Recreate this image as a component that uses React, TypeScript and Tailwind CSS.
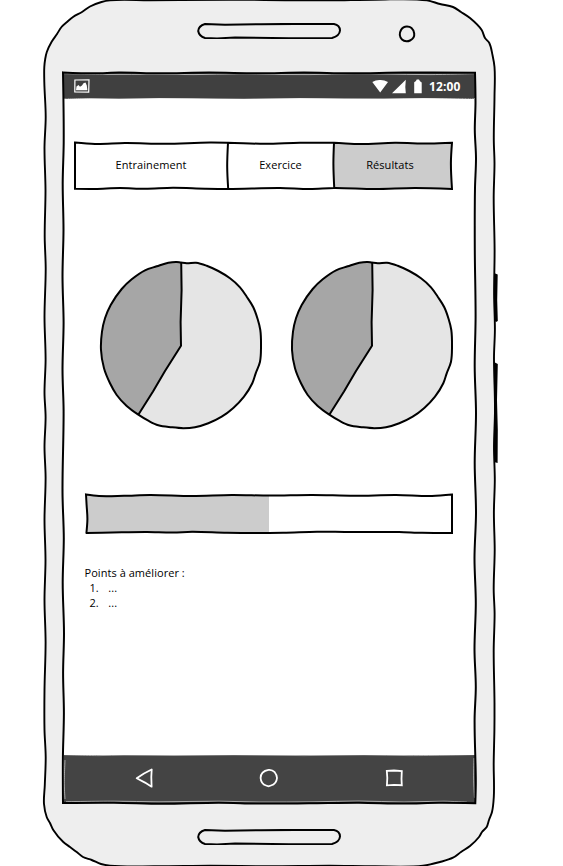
import type { ReactNode } from "react";

type Point = [number, number];

// Rounds the gentle bends of a polyline and leaves its real corners sharp.
function soften(path: string): string {
  return path
    .split("M")
    .filter(Boolean)
    .map((part) => {
      const closed = part.includes("Z");
      const points = part
        .replace("Z", "")
        .trim()
        .split("L")
        .map((pair) => pair.trim().split(" ").map(Number) as Point);
      const count = points.length;
      const at = (i: number): Point =>
        closed ? points[(i + count) % count] : points[Math.max(0, Math.min(count - 1, i))];
      const tangent = (i: number): Point => {
        const [a, b, c] = [at(i - 1), at(i), at(i + 1)];
        const u: Point = [b[0] - a[0], b[1] - a[1]];
        const v: Point = [c[0] - b[0], c[1] - b[1]];
        const lu = Math.hypot(...u);
        const lv = Math.hypot(...v);
        if (!lu || !lv || (u[0] * v[0] + u[1] * v[1]) / (lu * lv) < 0.6) return [0, 0];
        return [(u[0] / lu + v[0] / lv) / 2, (u[1] / lu + v[1] / lv) / 2];
      };
      let d = `M${points[0].join(" ")}`;
      for (let i = 0; i < (closed ? count : count - 1); i++) {
        const p = at(i);
        const q = at(i + 1);
        const reach = Math.hypot(q[0] - p[0], q[1] - p[1]) / 3;
        const s = tangent(i);
        const t = tangent(i + 1);
        d += `C${p[0] + s[0] * reach} ${p[1] + s[1] * reach} ${q[0] - t[0] * reach} ${q[1] - t[1] * reach} ${q[0]} ${q[1]}`;
      }
      return closed ? d + "Z" : d;
    })
    .join("");
}

type OutlineProps = { d: string; className?: string };

// Hand-drawn ink line laid over the box it decorates.
function Outline({ d, className = "text-black" }: OutlineProps) {
  return (
    <svg
      className={`pointer-events-none absolute inset-0 h-full w-full overflow-visible ${className}`}
      fill="none"
      stroke="currentColor"
      strokeWidth="2"
      strokeLinejoin="miter"
      aria-hidden="true"
    >
      <path d={soften(d)} />
    </svg>
  );
}

function PhoneBody() {
  return (
    <svg className="absolute inset-0" width="563" height="866" viewBox="0 0 563 866" aria-hidden="true">
      <path
        d={soften(
          "M110 .4L101.5 2L90 6.5L82 12L73 17L67 22L61.5 27L57 34L51.5 42L46.8 52L45.2 59L44.3 67L44.3 82L45.7 117L44.5 147L45.5 190L44.7 237L45.7 268L44.5 317L45.6 360L44.5 393L45.6 417L44.5 447L45.6 477L44.5 520L45.5 560L44.5 600L45.6 642L44.5 690L44.5 730L45.7 757L44.8 785L44 804L46.7 817L50 823L53.3 830L63.3 842L70 847L76.7 852L83 857L91.7 860L101 864L110 865.6L155 866.3L210 865.8L270 866.3L330 865.8L375 866.3L423 865.7L440 862L453 857.7L461 852L470 846L479 837L482 832L486.7 827L489 820L492 812L493.8 797L493.7 763L494.4 730L494.5 703L493.7 650L494.6 613L493.7 590L494.7 550L493.9 513L494.8 480L494 447L495 410L494 357L494.9 330L494.1 295L494.6 250L493.7 197L494.5 163L493.8 140L494.5 97L494.5 67L492.5 55L489.3 43L485 38L481.7 30L470 18L461 12L453 7L440 4L427 .4L375 -.3L330 .4L285 .2L230 -.3L150 .3Z",
        )}
        fill="#eee"
        stroke="#000"
        strokeWidth="1.9"
        strokeLinejoin="round"
      />
      <path d="M494 273L497.7 274.5L497.2 300L497.8 321L496 322L494 320Z" />
      <path d="M494 362L497.8 364L497 400L497.8 430L497.6 463L494 462Z" />
    </svg>
  );
}

function Speaker() {
  return (
    <svg className="h-4 w-36" viewBox="0 0 144 16" fill="none" stroke="#000" strokeWidth="2" aria-hidden="true">
      <path d="M8 1L28 1.7L64 1.2L98 .9L137 1Q142.8 2 143 7.5Q142.5 13 135 15L92 15.2L38 14.5L20 15.4L8 15Q2 13 1.2 8Q1.5 3 8 1Z" />
    </svg>
  );
}

function PieChart() {
  return (
    <svg className="h-[170px] w-[164px]" viewBox="0 0 164 170" stroke="#000" strokeWidth="2" strokeLinejoin="round" aria-label="Répartition">
      <path
        fill="#e5e5e5"
        stroke="none"
        d="M81.7 2.7L87.7 3.3L97 2.7L107.7 5.7L119.3 11L131 18.3L141 27.3L147.7 36.7L154.3 47.3L158.7 59.3L161.3 70L162 86.7L161 101.7L156.7 113.3L153.3 123.3L145 136.7L134.3 148L122.7 156.7L109.3 163.3L96 167.3L84.3 168.3L72.7 167.3L59.3 165.3L49.3 160.7L39.3 154.7L81.7 85.7Z"
      />
      <path
        fill="#a6a6a6"
        stroke="none"
        d="M39.3 154.7L27.7 146L17.7 135L11 123.3L5 108.3L2.3 90L3.3 71.7L6 58.3L11.7 45L22.7 29L32.7 19.3L46 10.3L57.7 6.3L69.3 2.7L77.7 2L81.7 2.7L82.2 30L81.4 60L81.9 86Z"
      />
      <path
        fill="none"
        d={soften(
          "M81.7 2.5L87.7 3.3L97 2.7L107.7 5.7L119.3 11L131 18.3L141 27.3L147.7 36.7L154.3 47.3L158.7 59.3L161.3 70L162 86.7L161 101.7L156.7 113.3L153.3 123.3L145 136.7L134.3 148L122.7 156.7L109.3 163.3L96 167.3L84.3 168.2L72.7 167.3L59.3 165.3L49.3 160.7L39.3 154.7L27.7 146L17.7 135L11 123.3L5 108.3L2 90L3 71.7L6 58.3L11.7 45L22.7 29L32.7 19.3L46 10.3L57.7 6.3L69.3 2.7L77.7 1.9Z",
        )}
      />
      <path fill="none" d="M82.2 2.5L82.6 30L81.6 62L82 85.7L66 111L54 131.5L39.3 154.7" />
    </svg>
  );
}

function Tab({ children, className }: { children: ReactNode; className: string }) {
  return <button className={`flex h-full items-center justify-center tracking-[0.08px] ${className}`}>{children}</button>;
}

function StatusBar() {
  return (
    <header className="relative flex h-[25px] shrink-0 items-center bg-[#404040] text-white">
      <svg className="ml-[10px]" width="16" height="14" viewBox="0 0 16 14" fill="none" stroke="currentColor" aria-hidden="true">
        <path strokeWidth="1.2" d="M.9 1L15 .8L14.7 13.1L.8 13Z" />
        <path fill="currentColor" stroke="none" d="M2 11.3L2.5 7.5L4.5 6L6 7.8L8 6.5L9.5 4.3L11.5 3.5L12.8 6.5L13.4 11.3Z" />
      </svg>
      <svg className="mt-0.5 ml-[282px]" width="50" height="15" viewBox="0 0 50 15" fill="currentColor" aria-hidden="true">
        <path d="M.3 3Q4 .8 8 1Q12 .8 16 3L8.2 13.4Z" />
        <path d="M20 14.2L33.8 .7L33.3 8L33.8 14.2Z" />
        <path d="M42.2 3.3L44 2L44.7 .6H47L48 2.3L49.7 3.5V14.2H42.2Z" />
      </svg>
      <time className="ml-[7px] pt-0.5 font-['Open_Sans'] text-xs font-bold tracking-[0.1px]">12:00</time>
      <Outline className="text-white/60 [stroke-width:1]" d="M0 .6L45 1.4L90 1.2L130 1.6L175 .8L210 1.5L245 1.6L290 .8L320 1L365 1.6L411 .6" />
      <Outline className="text-[#404040] [stroke-width:1]" d="M0 25.4L27 24.8L55 25.2L95 24.6L128 24.8L180 25.3L236 24.6L280 25L320 25.1L359 24.6L410 25.4" />
    </header>
  );
}

function NavigationBar() {
  return (
    <nav className="relative mt-auto flex h-12 shrink-0 items-center bg-[#444] pb-0.5 text-white">
      <svg className="ml-[71px]" width="18" height="20" viewBox="0 0 18 20" fill="none" stroke="currentColor" strokeWidth="1.8" aria-hidden="true">
        <path d="M1.7 10.3L9 5.5L16.7 1.5L16.3 9L16.6 18.7L10 14.6Z" strokeLinejoin="round" />
      </svg>
      <svg className="ml-[106px]" width="20" height="20" viewBox="0 0 20 20" fill="none" stroke="currentColor" strokeWidth="1.8" aria-hidden="true">
        <path d="M9.5 1.9Q13 1.4 15.7 4.2Q18 7 18 10Q17.5 16 12 17.5L9.5 18.4L7 17.5Q2 16 1.6 10Q1.7 3.2 9.5 1.9Z" />
      </svg>
      <svg className="ml-[106px]" width="18" height="18" viewBox="0 0 18 18" fill="none" stroke="currentColor" strokeWidth="1.8" aria-hidden="true">
        <path d="M1.8 1.8L9 1.5L16.8 2L16.5 10L16.8 16.2L9 15.9L1.9 16.3L2.3 9Z" />
      </svg>
      <Outline className="text-white/55 [stroke-width:1]" d="M0 -.3L35 .6L60 0L110 .5L170 -.2L240 .6L300 -.2L345 .6L411 -.4M1 5L.3 30L1 44M410 3L409.6 23L410.5 43M2 46.7L50 46.2L95 46.8L155 46.2L195 47L250 46.8L295 46L340 47L380 46.2L403 47.2" />
    </nav>
  );
}

export default function App() {
  return (
    <div className="relative flex h-[866px] w-[563px] flex-col overflow-hidden bg-white font-['Open_Sans','Noto_Sans',sans-serif] text-[11px] text-black">
      <PhoneBody />
      <div className="relative flex h-[73px] shrink-0 items-start pt-[23px] pl-[197px]">
        <Speaker />
        <svg className="mt-0.5 ml-[57px]" width="18" height="18" viewBox="0 0 18 18" fill="none" stroke="#000" strokeWidth="2" aria-hidden="true">
          <path d={soften("M9 1.5L13.5 3L16.2 8.5L15.5 12.5L12 15.5L8.5 16.3L4 14.5L1.8 10L3 5L5.5 2.4Z")} strokeLinejoin="round" />
        </svg>
      </div>

      <main className="relative ml-16 flex h-[730px] w-[411px] shrink-0 flex-col bg-white">
        <StatusBar />

        <div className="relative mt-[45px] ml-[11px] flex h-[45px] w-[377px] shrink-0">
          <Tab className="w-[152px]">Entrainement</Tab>
          <Tab className="w-[107px]">Exercice</Tab>
          <Tab className="w-[118px] bg-[#ccc] pr-1.5">Résultats</Tab>
          <Outline d="M0 -.5L20 1L50 .1L90 .7L135 -.4L153 -.2L190 .8L225 -.2L259 -.2L285 1L320 -.2L355 .5L377 -.3L375.9 20L377 46L340 45L300 46L259 45L235 46L205 45L153 46L130 45.7L98 44.8L70 45.8L45 45L20 45.9L0 45.8Z M153 -.2L152.2 24L153.2 46M259 -.2L258.4 21L259.3 46" />
        </div>

        <section className="mt-[72px] ml-[35px] flex gap-[27px]">
          <PieChart />
          <PieChart />
        </section>

        <div className="relative mt-[65px] ml-[23px] h-[38px] w-[365px] shrink-0">
          <div className="h-full w-[182px] bg-[#ccc]" />
          <Outline d="M-1 -.5L12 1L37 .8L63 0L105 1L145 0L183 .6L225 -.1L267 .8L309 0L345 1L365 -.4L365 38L335 37.8L312 37L260 37L230 36.7L196 37.8L140 37.8L105 36.7L86 37.6L60 37L25 37.5L-.6 38L.4 24L-.4 10Z" />
        </div>

        <section className="mt-[32px] ml-[20.5px] leading-[15px] tracking-[0.05px]">
          <p>Points à améliorer :</p>
          <ol className="pl-[5px]">
            <li className="flex gap-[9.5px]"><span>1.</span><span>...</span></li>
            <li className="flex gap-[9.5px]"><span>2.</span><span>...</span></li>
          </ol>
        </section>

        <NavigationBar />
        <Outline d="M-1 -.6L30 .3L55 -.4L95 .2L145 -.4L195 .2L240 -.4L285 .2L340 -.4L411 -.3L411.5 30L410.8 57L412 85L411 115L410.8 177L411.6 244L410.7 294L412 340L410.7 390L412 440L410.5 485L411.8 530L410.5 577L411.8 614L410.6 646L411.8 710L411.3 730.2L375 729.8L340 730.6L295 729.7L245 730.3L195 730.6L155 729.8L98 730.8L50 729.8L-1 730L-1.1 685L-.1 640L-.9 600L0 560L-1.3 510L-.2 465L-1.5 420L-.4 337L-1.5 297L-.4 250L-1.5 204L-.5 157L-1.3 110L-.3 70Z" />
      </main>

      <div className="relative flex shrink-0 pt-[26px] pl-[197px]">
        <Speaker />
      </div>
    </div>
  );
}
